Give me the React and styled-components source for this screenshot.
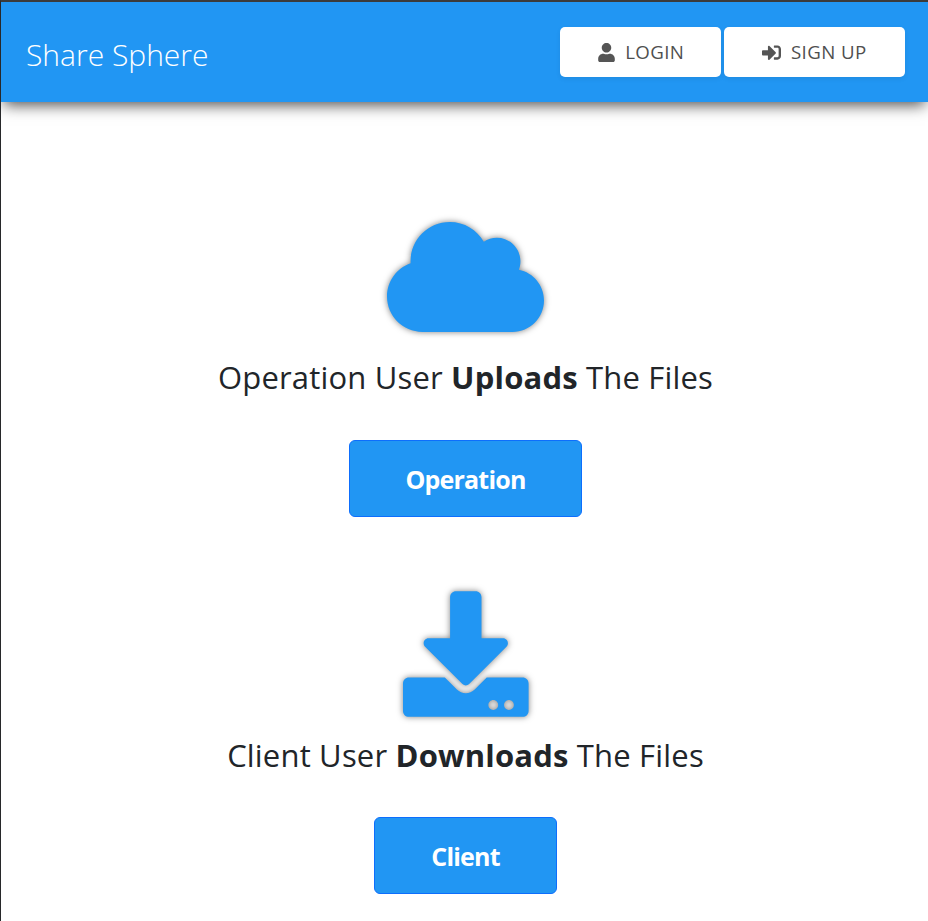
import React from "react";
import styled, { createGlobalStyle } from "styled-components";
import { FaUser, FaSignInAlt, FaCloud, FaDownload } from "react-icons/fa";

const GlobalStyle = createGlobalStyle`
  *, *::before, *::after { box-sizing: border-box; }
  body { margin: 0; background: #fff; overflow: hidden; }
`;

const Page = styled.div`
  height: 921px;
  border-top: 2px solid #3b3b3b;
  border-left: 1px solid #27282a;
  background: #fff;
  color: #212529;
  font-family: "Open Sans", sans-serif;
  overflow: hidden;
`;

const Header = styled.header`
  display: flex;
  align-items: flex-start;
  justify-content: space-between;
  height: 100px;
  padding: 25px 23px 0 25px;
  background: #2196f3;
  box-shadow: 0 6px 14px -3px rgba(0, 0, 0, 0.7);
`;

const Brand = styled.a`
  padding-top: 7px;
  color: #fff;
  font-size: 30px;
  font-weight: 300;
  line-height: 42px;
  white-space: nowrap;
`;

const Actions = styled.nav`
  display: flex;
  gap: 3px;
`;

const NavButton = styled.button`
  display: flex;
  align-items: center;
  justify-content: center;
  gap: 9.5px;
  width: ${(p) => p.$width}px;
  height: 50px;
  padding: 0;
  border: 0;
  border-radius: 5px;
  background: #fff;
  box-shadow: 0 2px 5px rgba(0, 0, 0, 0.07);
  color: #4f4f4f;
  font: 400 18.7px/50px "Open Sans", sans-serif;
  letter-spacing: 0.4px;
  white-space: nowrap;

  svg { font-size: 19px; color: #555; }
`;

const Main = styled.main`
  display: flex;
  flex-direction: column;
  align-items: center;
  padding-top: 112px;
`;

const Feature = styled.section`
  display: flex;
  flex-direction: column;
  align-items: center;
  height: 377px;
  padding-left: 2px;

  > svg {
    flex: none;
    width: ${(p) => p.$iconWidth}px;
    height: 126px;
    color: #2196f3;
    overflow: visible;
    filter: drop-shadow(0 0 3px rgba(0, 0, 0, 0.5));
  }
`;

const Caption = styled.h2`
  margin: ${(p) => p.$gap}px 0 0;
  height: ${(p) => 58 - p.$gap}px;
  font-size: 31px;
  font-weight: 400;
  line-height: 42px;
  letter-spacing: 0.18px;
  white-space: nowrap;

  b { font-weight: 700; }
`;

const ActionButton = styled.button`
  width: ${(p) => p.$width}px;
  height: 77px;
  margin-top: 42px;
  padding: 1px 0 0;
  border: 1px solid #0d6efd;
  border-radius: 6px;
  background: #2196f3;
  color: #fff;
  font: 700 25px/36px "Open Sans", sans-serif;
  letter-spacing: -0.8px;
`;

export default function App() {
  return (
    <Page>
      <GlobalStyle />
      <Header>
        <Brand>Share Sphere</Brand>
        <Actions>
          <NavButton $width={161}><FaUser />LOGIN</NavButton>
          <NavButton $width={181}><FaSignInAlt />SIGN UP</NavButton>
        </Actions>
      </Header>
      <Main>
        <Feature $iconWidth={157}>
          <FaCloud />
          <Caption $gap={16}>Operation User <b>Uploads</b> The Files</Caption>
          <ActionButton $width={233}>Operation</ActionButton>
        </Feature>
        <Feature $iconWidth={125.6}>
          <FaDownload />
          <Caption $gap={17}>Client User <b>Downloads</b> The Files</Caption>
          <ActionButton $width={183}>Client</ActionButton>
        </Feature>
      </Main>
    </Page>
  );
}
